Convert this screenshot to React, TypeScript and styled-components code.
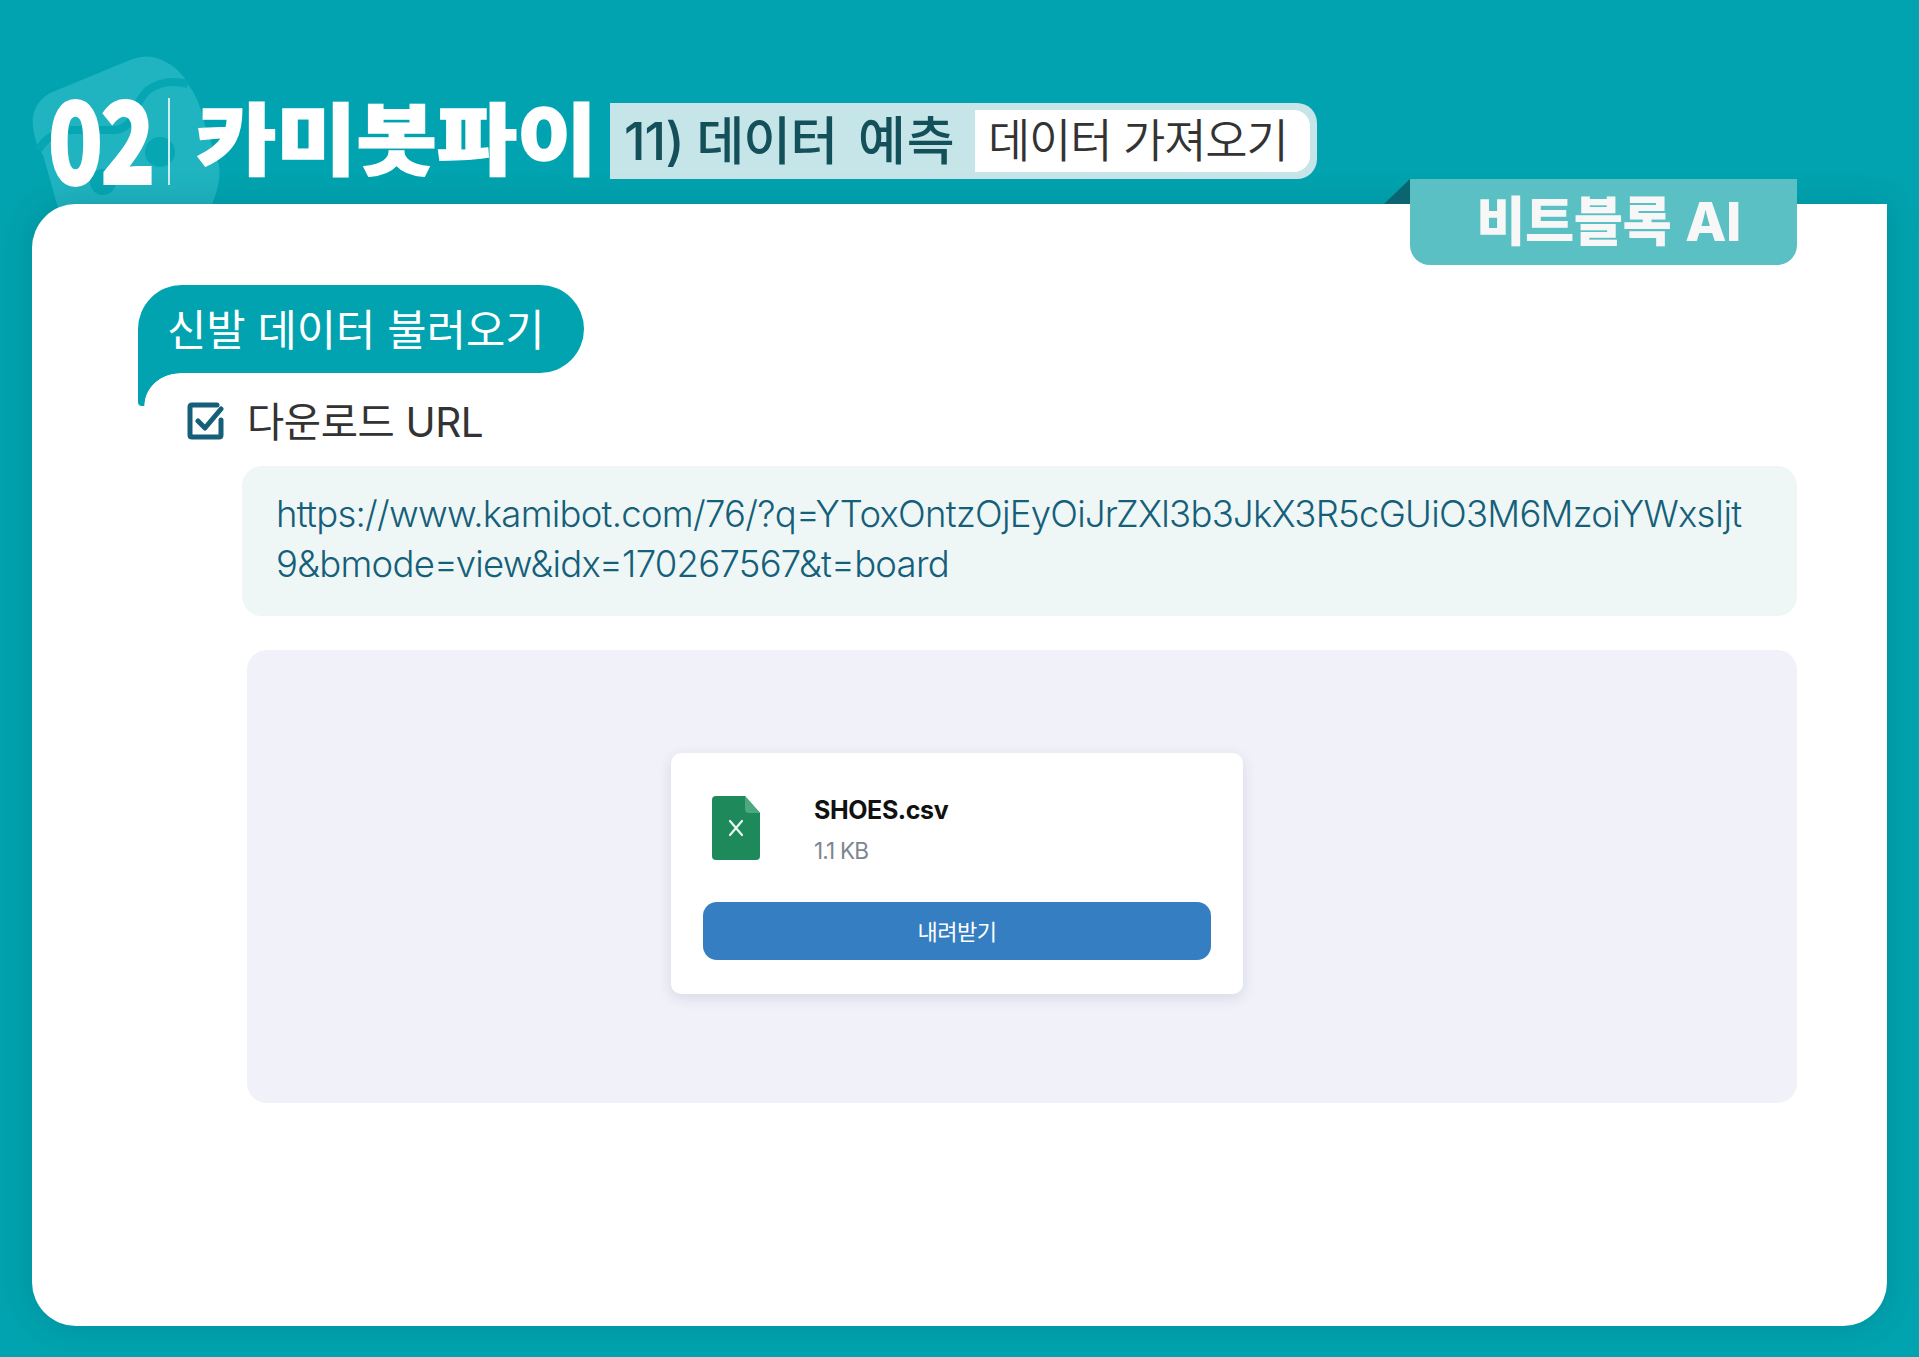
import React from 'react';
import styled, { createGlobalStyle } from 'styled-components';

const KR = `"Noto Sans CJK KR", "Noto Sans", sans-serif`;
const LATIN_KR = `Inter, ${KR}`;

const GlobalStyle = createGlobalStyle`
  html, body {
    margin: 0;
    padding: 0;
    background: #00a3af;
  }
  * {
    box-sizing: border-box;
  }
`;

const Page = styled.div`
  position: relative;
  width: 1919px;
  height: 1357px;
  padding: 98px 32px 31px;
  display: flex;
  flex-direction: column;
  overflow: hidden;
  background: #00a3af;
  font-family: ${LATIN_KR};
`;

const Blob = styled.svg`
  position: absolute;
  left: 0;
  top: 0;
  width: 240px;
  height: 220px;
`;

const Header = styled.header`
  position: relative;
  height: 106px;
  display: flex;
  align-items: flex-start;
  flex-shrink: 0;
`;

const Num = styled.div`
  width: 120px;
  height: 87px;
  margin: -7px 0 0 16px;
  color: #fff;
  font-family: ${KR};
  font-size: 114px;
  font-weight: 900;
  line-height: 87px;
  letter-spacing: -3px;
  -webkit-text-stroke: 2px #fff;
  transform: scaleX(0.79);
  transform-origin: left center;
`;

const Divider = styled.div`
  width: 2px;
  height: 87px;
  background: #cdeef0;
`;

const Title = styled.h1`
  width: 396px;
  margin: -4px 0 0 26px;
  color: #fff;
  font-family: ${KR};
  font-size: 78px;
  font-weight: 900;
  line-height: 82px;
  letter-spacing: 0;
  white-space: nowrap;
  -webkit-text-stroke: 1.5px #fff;
  transform: scaleX(1.118);
  transform-origin: left center;
`;

const SubTab = styled.div`
  width: 707px;
  height: 76px;
  margin: 5px 0 0 18px;
  padding: 7px 7px 7px 14px;
  display: flex;
  justify-content: space-between;
  background: #c5e5e8;
  border-radius: 0 20px 20px 0;
`;

const SubTitle = styled.span`
  color: #14505a;
  font-size: 52px;
  font-weight: 500;
  line-height: 64px;
  letter-spacing: -1px;
  white-space: nowrap;
`;

const SubLast = styled.span`
  margin-left: 8px;
  letter-spacing: 1px;
`;

const SubChip = styled.span`
  width: 335px;
  padding-left: 13px;
  background: #fff;
  border-radius: 0 16px 16px 0;
  color: #333;
  font-size: 46px;
  font-weight: 350;
  line-height: 60px;
  letter-spacing: -1.2px;
  white-space: nowrap;
`;

const Sheet = styled.main`
  position: relative;
  flex: 1;
  padding: 81px 90px 0 106px;
  background: #fff;
  border-radius: 44px 0 44px 44px;
  box-shadow: 0 0 30px rgba(0, 70, 90, 0.22);
`;

const Badge = styled.div`
  position: absolute;
  top: -25px;
  right: 90px;
  width: 387px;
  height: 86px;
  display: flex;
  align-items: center;
  justify-content: center;
  padding: 0 0 9px 10px;
  background: #5bc0c3;
  border-radius: 0 0 20px 20px;
  color: #f7f7f7;
  font-size: 53.5px;
  font-weight: 800;
  letter-spacing: -0.5px;
  word-spacing: 3px;
  white-space: nowrap;

  &::before {
    content: '';
    position: absolute;
    left: -26px;
    top: 0;
    width: 26px;
    height: 25px;
    background: #0a6570;
    clip-path: polygon(100% 0, 100% 100%, 0 100%);
  }
`;

const Pill = styled.h2`
  position: relative;
  width: 446px;
  height: 88px;
  margin: 0;
  padding-left: 29px;
  background: #00a3af;
  border-radius: 44px 44px 44px 0;
  color: #fff;
  font-size: 42.7px;
  font-weight: 400;
  line-height: 92px;
  white-space: nowrap;

  &::after {
    content: '';
    position: absolute;
    left: 0;
    top: 100%;
    width: 42px;
    height: 33px;
    border-bottom-left-radius: 4px;
    background: radial-gradient(ellipse 36px 33px at 100% 100%, transparent 98%, #00a3af 100%);
  }
`;

const CheckRow = styled.div`
  display: flex;
  align-items: center;
  gap: 23px;
  height: 38px;
  margin: 29px 0 0 49px;
  color: #333;
  font-size: 40.5px;
  font-weight: 400;
  letter-spacing: -0.4px;
  white-space: nowrap;
`;

const CheckLabel = styled.span`
  margin-top: -4px;
`;

const UrlBox = styled.div`
  height: 150px;
  margin: 26px 0 0 104px;
  padding: 23px 20px 0 34px;
  background: #eef7f6;
  border-radius: 20px;
  color: #165f7a;
  font-size: 36.5px;
  font-weight: 300;
  line-height: 50px;
  letter-spacing: -0.75px;
  white-space: nowrap;
`;

const Stage = styled.section`
  height: 453px;
  margin: 34px 0 0 109px;
  padding: 103px 0 0 424px;
  background: #f0f1f9;
  border-radius: 20px;
`;

const FileCard = styled.div`
  width: 572px;
  height: 241px;
  padding: 43px 32px 0;
  background: #fff;
  border-radius: 10px;
  box-shadow: 0 4px 14px rgba(40, 50, 80, 0.12);
`;

const FileRow = styled.div`
  display: flex;
  gap: 54px;
  height: 64px;
  padding-left: 9px;
`;

const FileInfo = styled.div`
  display: flex;
  flex-direction: column;
  margin-top: -1px;
`;

const FileName = styled.span`
  color: #111;
  font-size: 25px;
  font-weight: 700;
  line-height: 30px;
  letter-spacing: -0.4px;
`;

const FileSize = styled.span`
  margin-top: 13px;
  color: #7d8590;
  font-size: 22.5px;
  line-height: 26px;
  letter-spacing: -0.8px;
`;

const DownloadButton = styled.button`
  display: block;
  width: 508px;
  height: 58px;
  margin-top: 42px;
  padding: 0 0 2px;
  border: none;
  border-radius: 14px;
  background: #367ec2;
  color: #fff;
  font-family: ${KR};
  font-size: 22px;
  font-weight: 400;
  letter-spacing: -0.5px;
`;

const App: React.FC = () => (
  <>
    <GlobalStyle />
    <Page>
      <Blob viewBox="0 0 240 220" aria-hidden="true">
        <path
          d="M50 93 L130 60 Q147 53 162 60 Q180 68 188 84 Q200 100 205 125 L219 165 Q222 185 207 215 L60 215 L43 155 L38 147 Q30 125 34 112 Q38 100 50 93 Z"
          fill="#1fb4c0"
        />
        <path
          d="M188 84 Q165 78 148 90 Q138 100 135 112 Q130 128 115 130 L70 130 Q50 132 38 150"
          fill="none"
          stroke="#06a6b2"
          strokeWidth="8"
        />
        <circle cx="160" cy="152" r="15" fill="#06a6b2" />
        <circle cx="103" cy="182" r="13" fill="#06a6b2" />
      </Blob>
      <Header>
        <Num>02</Num>
        <Divider />
        <Title>카미봇파이</Title>
        <SubTab>
          <SubTitle>
            11) 데이터 <SubLast>예측</SubLast>
          </SubTitle>
          <SubChip>데이터 가져오기</SubChip>
        </SubTab>
      </Header>
      <Sheet>
        <Badge>비트블록 AI</Badge>
        <Pill>신발 데이터 불러오기</Pill>
        <CheckRow>
          <svg width="37" height="38" viewBox="0 0 37 38" fill="none">
            <path
              d="M30 3 H5 Q3 3 3 5 V33 Q3 35 5 35 H32 Q34 35 34 33 V18"
              stroke="#165f7a"
              strokeWidth="5"
              strokeLinecap="round"
            />
            <path
              d="M11 19 L18 26 L34 7"
              stroke="#165f7a"
              strokeWidth="5"
              strokeLinecap="round"
              strokeLinejoin="round"
            />
          </svg>
          <CheckLabel>다운로드 URL</CheckLabel>
        </CheckRow>
        <UrlBox>
          https://www.kamibot.com/76/?q=YToxOntzOjEyOiJrZXl3b3JkX3R5cGUiO3M6MzoiYWxsIjt
          <br />
          9&amp;bmode=view&amp;idx=170267567&amp;t=board
        </UrlBox>
        <Stage>
          <FileCard>
            <FileRow>
              <svg width="48" height="64" viewBox="0 0 48 64">
                <path
                  d="M4 0 H33 L48 17 V60 Q48 64 44 64 H4 Q0 64 0 60 V4 Q0 0 4 0 Z"
                  fill="#1e8a5b"
                />
                <path d="M33 0 L48 17 H37 Q33 17 33 13 Z" fill="#4ca97f" />
                <path
                  d="M18 25 L30 39 M30 25 L18 39"
                  stroke="#eaf6f0"
                  strokeWidth="2.2"
                  strokeLinecap="round"
                />
              </svg>
              <FileInfo>
                <FileName>SHOES.csv</FileName>
                <FileSize>1.1 KB</FileSize>
              </FileInfo>
            </FileRow>
            <DownloadButton>내려받기</DownloadButton>
          </FileCard>
        </Stage>
      </Sheet>
    </Page>
  </>
);

export default App;
